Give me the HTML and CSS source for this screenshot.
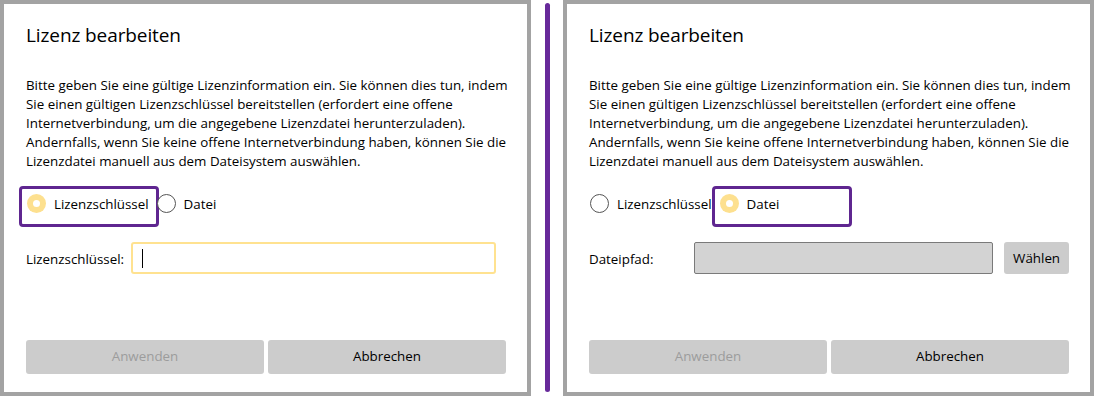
FILE: index.html
```html
<!DOCTYPE html>
<html lang="de">
<head>
<meta charset="utf-8">
<title>Lizenz bearbeiten</title>
<link rel="stylesheet" href="styles.css">
</head>
<body>
<div class="stage">
  <section class="panel">
    <h1 class="title">Lizenz bearbeiten</h1>
    <p class="intro">
      <span class="line">Bitte geben Sie eine gültige Lizenzinformation ein. Sie können dies tun, indem</span>
      <span class="line">Sie einen gültigen Lizenzschlüssel bereitstellen (erfordert eine offene</span>
      <span class="line">Internetverbindung, um die angegebene Lizenzdatei herunterzuladen).</span>
      <span class="line">Andernfalls, wenn Sie keine offene Internetverbindung haben, können Sie die</span>
      <span class="line">Lizenzdatei manuell aus dem Dateisystem auswählen.</span>
    </p>
    <div class="radios">
      <div class="radio focused checked"><span class="dot"></span><span class="rlabel">Lizenzschlüssel</span></div>
      <div class="radio"><span class="dot"></span><span class="rlabel">Datei</span></div>
    </div>
    <div class="field">
      <span class="flabel">Lizenzschlüssel:</span>
      <div class="textbox active"><span class="caret"></span></div>
    </div>
    <div class="actions">
      <button class="btn disabled">Anwenden</button>
      <button class="btn">Abbrechen</button>
    </div>
  </section>

  <div class="divider"><span class="rule"></span></div>

  <section class="panel">
    <h1 class="title">Lizenz bearbeiten</h1>
    <p class="intro">
      <span class="line">Bitte geben Sie eine gültige Lizenzinformation ein. Sie können dies tun, indem</span>
      <span class="line">Sie einen gültigen Lizenzschlüssel bereitstellen (erfordert eine offene</span>
      <span class="line">Internetverbindung, um die angegebene Lizenzdatei herunterzuladen).</span>
      <span class="line">Andernfalls, wenn Sie keine offene Internetverbindung haben, können Sie die</span>
      <span class="line">Lizenzdatei manuell aus dem Dateisystem auswählen.</span>
    </p>
    <div class="radios">
      <div class="radio"><span class="dot"></span><span class="rlabel">Lizenzschlüssel</span></div>
      <div class="radio focused checked"><span class="dot"></span><span class="rlabel">Datei</span></div>
    </div>
    <div class="field">
      <span class="flabel">Dateipfad:</span>
      <div class="textbox readonly"></div>
      <button class="pick">Wählen</button>
    </div>
    <div class="actions">
      <button class="btn disabled">Anwenden</button>
      <button class="btn">Abbrechen</button>
    </div>
  </section>
</div>
</body>
</html>
```
FILE: styles.css
```css
* { box-sizing: border-box; }

html, body {
  margin: 0;
  padding: 0;
  background: #ffffff;
}

body {
  font-family: "Open Sans", "Noto Sans", sans-serif;
  font-size: 13.35px;
  color: #000;
}

.stage {
  display: flex;
  width: 1094px;
  height: 396px;
}

.panel {
  width: 531px;
  height: 396px;
  border: 4px solid #a3a3a3;
  background: #fff;
  padding: 18px 21px 18px 22px;
  display: flex;
  flex-direction: column;
}

.title {
  margin: 0;
  font-size: 19px;
  font-weight: 400;
  line-height: 26px;
  letter-spacing: -0.1px;
}

.intro {
  margin: 28px 0 0 0;
  line-height: 19px;
  white-space: nowrap;
}

.intro .line { display: block; }

.radios {
  display: flex;
  align-items: center;
  gap: 8px;
  margin-top: 15px;
  margin-left: 1px;
  height: 35px;
}

.radio {
  position: relative;
  display: flex;
  align-items: center;
  gap: 8px;
  height: 35px;
}

.radio.focused::before {
  content: "";
  position: absolute;
  left: -8px;
  top: 0;
  width: 134px;
  height: 35px;
  border: 3px solid #5f2690;
  border-radius: 4px;
}

.dot {
  width: 19px;
  height: 19px;
  border-radius: 50%;
  border: 1px solid #555;
  background: #fff;
  flex: none;
  display: flex;
  align-items: center;
  justify-content: center;
}

.radio.checked .dot {
  border: none;
  background: #fde08f;
}

.radio.checked .dot::after {
  content: "";
  width: 7px;
  height: 7px;
  border-radius: 50%;
  background: #fff;
}

.field {
  display: flex;
  align-items: center;
  margin-top: 21px;
  height: 32px;
}

.flabel {
  width: 105px;
  flex: none;
  padding-top: 2px;
}

.textbox {
  height: 32px;
  border-radius: 3px;
}

.textbox.active {
  width: 365px;
  border: 2px solid #ffe290;
  background: #fff;
  display: flex;
  align-items: center;
  padding-left: 9px;
}

.caret {
  width: 1px;
  height: 19px;
  background: #000;
}

.textbox.readonly {
  width: 300px;
  height: 32px;
  border: 1px solid #7a7a7a;
  background: #d3d3d3;
  border-radius: 2px;
}

.pick {
  margin-left: 11px;
  width: 65px;
  height: 32px;
  border: none;
  border-radius: 3px;
  background: #cccccc;
  font: inherit;
  color: #000;
  padding: 0;
}

.actions {
  margin-top: auto;
  display: flex;
  gap: 4px;
}

.btn {
  flex: 1;
  height: 34px;
  border: none;
  border-radius: 3px;
  background: #cccccc;
  font: inherit;
  color: #000;
  padding: 0 0 2px;
}

.btn.disabled { color: #9c9c9c; }

.divider {
  width: 32px;
  flex: none;
  display: flex;
  justify-content: center;
  padding: 3px 0 4px;
}

.rule {
  width: 5px;
  border-radius: 3px;
  background: #67299a;
}
```
